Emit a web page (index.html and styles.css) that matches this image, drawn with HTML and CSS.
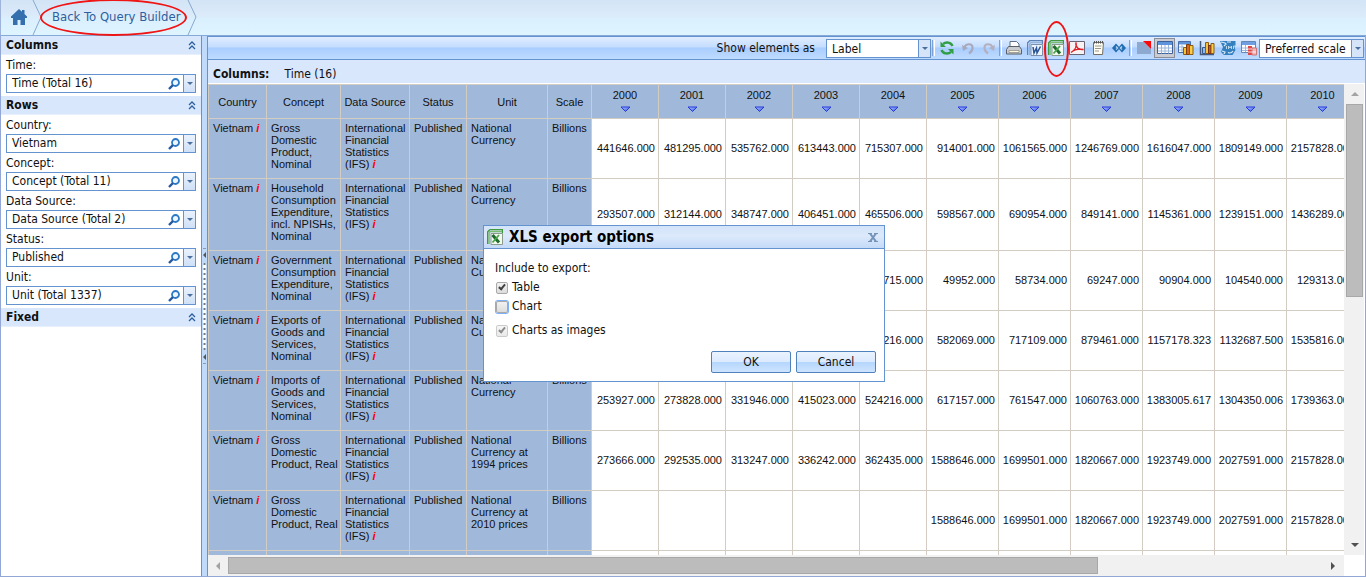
FILE: index.html
```html
<!DOCTYPE html>
<html lang="en">

<head>
    <meta charset="UTF-8">
    <meta name="viewport" content="width=device-width, initial-scale=1.0">
    <title>Query</title>
    <link rel="stylesheet" href="styles.css">
</head>

<body>
    <!-- shared icons -->
    <svg class="defs" width="0" height="0">
        <defs>
            <linearGradient id="gArrow" x1="0" y1="0" x2="1" y2="1">
                <stop offset="0" stop-color="#a9c4ff"/>
                <stop offset="1" stop-color="#2f58e8"/>
            </linearGradient>
        </defs>
        <symbol id="i-sort" viewBox="0 0 11 7"><path d="M1 1h9L5.500 5.500z" fill="url(#gArrow)" stroke="#2a38d8"/></symbol>
        <symbol id="i-up" viewBox="0 0 8 9"><path d="M1 4l3-3 3 3M1 8l3-3 3 3" fill="none" stroke="#2c5f9f" stroke-width="1.300"/></symbol>
        <symbol id="i-search" viewBox="0 0 12 12"><circle cx="7.500" cy="4.500" r="3.500" fill="#eef6ff" stroke="#2c7ac6" stroke-width="1.800"/><path d="M5 7L1 11" stroke="#24589f" stroke-width="2.400"/></symbol>
        <symbol id="i-xls" viewBox="0 0 16 16">
            <path d="M3 .5h12.500v4M.5 15V3L3 .5" fill="none" stroke="#3f9a3f" stroke-width="1.400"/>
            <path d="M2 15V4.500Q2 2.500 4 2.500h11" fill="none" stroke="#79bb70" stroke-width="1.500"/>
            <path d="M4 4.500h11.500v11H4z" fill="#f3f8f1" stroke="#8b9b8b"/>
            <path d="M5.500 6L12 13.500" stroke="#1d6b2b" stroke-width="3"/>
            <path d="M12 6L5.500 13.500" stroke="#4ba64c" stroke-width="1.800"/>
        </symbol>
    </svg>

    <header class="top">
        <a class="home" href="#" aria-label="Home">
            <svg width="16" height="16" viewBox="0 0 16 16"><path d="M8 0l3 2.800V1h2.500v4L16 7.500V9h-2v7H9.500v-5h-3v5H2V9H0V7.500z" fill="#356fae"/></svg>
        </a>
        <svg class="chev" width="10" height="35" viewBox="0 0 10 35"><path d="M1 0l8 17-8 18" fill="none" stroke="#86a9cf"/></svg>
        <a class="back" href="#">Back To Query Builder<span class="mark mark-back"></span></a>
        <svg class="chev" width="10" height="35" viewBox="0 0 10 35"><path d="M1 0l8 17-8 18" fill="none" stroke="#86a9cf"/></svg>
    </header>

    <div class="page">
        <aside class="side">
            <h2>Columns <svg width="8" height="9"><use href="#i-up"/></svg></h2>
            <section>
                <label for="f-time">Time:</label>
                <div class="field"><input id="f-time" type="text" value="Time (Total 16)"><button class="find" aria-label="Search"><svg width="12" height="12"><use href="#i-search"/></svg></button><button class="drop" aria-label="Open"></button></div>
            </section>
            <h2>Rows <svg width="8" height="9"><use href="#i-up"/></svg></h2>
            <section>
                <label for="f-country">Country:</label>
                <div class="field"><input id="f-country" type="text" value="Vietnam"><button class="find" aria-label="Search"><svg width="12" height="12"><use href="#i-search"/></svg></button><button class="drop" aria-label="Open"></button></div>
                <label for="f-concept">Concept:</label>
                <div class="field"><input id="f-concept" type="text" value="Concept (Total 11)"><button class="find" aria-label="Search"><svg width="12" height="12"><use href="#i-search"/></svg></button><button class="drop" aria-label="Open"></button></div>
                <label for="f-source">Data Source:</label>
                <div class="field"><input id="f-source" type="text" value="Data Source (Total 2)"><button class="find" aria-label="Search"><svg width="12" height="12"><use href="#i-search"/></svg></button><button class="drop" aria-label="Open"></button></div>
                <label for="f-status">Status:</label>
                <div class="field"><input id="f-status" type="text" value="Published"><button class="find" aria-label="Search"><svg width="12" height="12"><use href="#i-search"/></svg></button><button class="drop" aria-label="Open"></button></div>
                <label for="f-unit">Unit:</label>
                <div class="field"><input id="f-unit" type="text" value="Unit (Total 1337)"><button class="find" aria-label="Search"><svg width="12" height="12"><use href="#i-search"/></svg></button><button class="drop" aria-label="Open"></button></div>
            </section>
            <h2>Fixed <svg width="8" height="9"><use href="#i-up"/></svg></h2>
        </aside>

        <div class="split">
            <svg width="5" height="116" viewBox="0 0 5 116">
                <path d="M1 .5h3M1 115.500h3" stroke="#8a9bb0"/>
                <path d="M4 4v6L1 7zM4 106v6l-3-3z" fill="#555"/>
                <path d="M2.500 15v87" stroke="#fff" stroke-width="3"/>
                <path d="M2.500 15v87" stroke="#777" stroke-width="2" stroke-dasharray="2 3"/>
            </svg>
        </div>

        <main class="main">
            <div class="bar">
                <label for="show-as">Show elements as</label>
                <span class="pick"><select id="show-as"><option>Label</option></select></span>
                <i class="sep"></i>
                <button class="tool" aria-label="Refresh"><svg viewBox="0 0 16 16"><path d="M13.500 6C12 2 7 1.500 4 4M2.500 10C4 14 9 14.500 12 12" fill="none" stroke="#2f9e44" stroke-width="2.400"/><path d="M1.500 1.500V7H7zM14.500 14.500V9H9z" fill="#2f9e44"/></svg></button>
                <button class="tool" aria-label="Undo"><svg viewBox="0 0 16 16"><path d="M4 8C6 3 13 3 12.500 8c0 3-2 4.500-3.500 5.500" fill="none" stroke="#a9a9bd" stroke-width="2.200"/><path d="M2 5l1 6 5-3z" fill="#a9a9bd"/></svg></button>
                <button class="tool" aria-label="Redo"><svg viewBox="0 0 16 16"><path d="M12 8C10 3 3 3 3.500 8c0 3 2 4.500 3.500 5.500" fill="none" stroke="#b3b0bf" stroke-width="2.200"/><path d="M14 5l-1 6-5-3z" fill="#b3b0bf"/></svg></button>
                <i class="sep"></i>
                <button class="tool" aria-label="Print"><svg viewBox="0 0 16 16"><path d="M4 7V1.500h6.500L13 4v3z" fill="#fff" stroke="#5b7186"/><path d="M2.500 6.500h11l2 3V14H.5V9.500z" fill="#c9cdd2" stroke="#596069"/><path d="M3 10.500h10v2H3z" fill="#fff8d8" stroke="#777" stroke-width=".6"/></svg></button>
                <button class="tool" aria-label="Word"><svg viewBox="0 0 16 16"><path d="M15.500 4V.5H3L.5 3v12" fill="none" stroke="#5c83b7" stroke-width="1.400"/><path d="M2.500 15V4l1.500-1.500h11" fill="none" stroke="#94b4da" stroke-width="1.400"/><path d="M4 4.500h11.500v11H4z" fill="#edf3fb" stroke="#7d90ab"/><path d="M6 7l1 6 2.500-5 .5 5 3.500-6.500" fill="none" stroke="#275296" stroke-width="1.500"/></svg></button>
                <button class="tool" aria-label="Excel"><svg viewBox="0 0 16 16"><use href="#i-xls"/></svg><span class="mark mark-xls"></span></button>
                <button class="tool" aria-label="PDF"><svg viewBox="0 0 16 16"><path d="M.5 1.500h15v13H.5z" fill="#f7f2f3" stroke="#6b6472"/><path d="M2 12.500C6 10 8 6 7 2.500 6 7 10 10.500 14.500 9.500 9 8.500 5 10 2 12.500z" fill="none" stroke="#e02025" stroke-width="1.300"/></svg></button>
                <button class="tool" aria-label="Notes"><svg viewBox="0 0 16 16"><path d="M3.500 2.500h10l-1 12h-9z" fill="#fffdf2" stroke="#746f64"/><path d="M4.500 1v2.500M6.500 1v2.500M8.500 1v2.500M10.500 1v2.500M12.500 1v2.500" stroke="#555"/><path d="M5 6h6.500M5 8.500h6M5 11h4" stroke="#9a968c"/></svg></button>
                <button class="tool" aria-label="Embed"><svg viewBox="0 0 16 16"><path d="M5 3.500L9 8l-4 4.500L1 8zM11 3.500L15 8l-4 4.500L7 8z" fill="#1f6cb0"/><path d="M5 6.500L6.500 8 5 9.500M11 6.500L9.500 8 11 9.500" fill="none" stroke="#b8d6f4" stroke-width="1.400"/></svg></button>
                <i class="sep"></i>
                <button class="tool" aria-label="Corner"><svg viewBox="0 0 16 16"><path d="M1 2h7l7 7v5H1z" fill="#8ea9cf"/><path d="M7 1h8v8z" fill="#fb0808"/></svg></button>
                <button class="tool on" aria-label="Table"><svg viewBox="0 0 16 16"><path d="M.5 1.500h15v12H.5z" fill="#fff" stroke="#3c6199"/><path d="M1 2h14v3H1z" fill="#5d94dd"/><path d="M1 8h14M1 11h14M4.500 5v8.500M8 5v8.500M11.500 5v8.500" stroke="#9ab6dc"/></svg></button>
                <button class="tool" aria-label="Table and chart"><svg viewBox="0 0 16 16"><path d="M.5 1.500h12v11H.5z" fill="#fff" stroke="#4a6da5"/><path d="M1 2h11v2.500H1z" fill="#5d94dd"/><path d="M1 7h5M1 10h5M4 5v7" stroke="#9ab6dc"/><path d="M5.500 7.500h3v7h-3z" fill="#f6c12e" stroke="#8d5a13"/><path d="M8.500 4.500h3v10h-3z" fill="#d9661f" stroke="#7a3b10"/><path d="M11.500 5.500h3.500v9h-3.500z" fill="#f5ce4a" stroke="#8d5a13"/></svg></button>
                <button class="tool" aria-label="Chart"><svg viewBox="0 0 16 16"><path d="M1.500 1v13.500H15" fill="none" stroke="#45597d" stroke-width="1.500"/><path d="M3.500 7.500h3v6h-3z" fill="#8eb8ef" stroke="#34598f"/><path d="M6.500 2.500h3v11h-3z" fill="#f3c33c" stroke="#8d5a13"/><path d="M9.500 5.500h2.500v8H9.500z" fill="#d94d2a" stroke="#7a2b10"/><path d="M12 3.500h3v10h-3z" fill="#f5ce4a" stroke="#8d5a13"/></svg></button>
                <button class="tool" aria-label="Map"><svg viewBox="0 0 16 16"><path d="M0 1h15.500v4l-1 2 1 3-3 5H4l-3-3 2-5z" fill="#347fc0"/><path d="M1 2l4 1 1 1-2 2M2 11l3 1-1 2M7 2h4M8 12.500c2 1 4 0 5-1.500" fill="none" stroke="#d9ebf8" stroke-width="1.200"/><path d="M6.500 6v3M8.500 9V6l1.500 2 1.500-2v3M13.500 9V6H15" fill="none" stroke="#d9ebf8" stroke-width=".8"/></svg></button>
                <button class="tool" aria-label="Highlight"><svg viewBox="0 0 16 16"><path d="M.5 1.500h14v11H.5z" fill="#fff" stroke="#6587b8"/><path d="M1 2h13v3H1z" fill="#6f9fe0"/><path d="M1 8h13M1 10.500h13M4.500 5v7" stroke="#9ab6dc"/><path d="M7 6h4v9H7z" fill="#df4545"/><path d="M11 8h4.500v7H11z" fill="#f3b6b6" stroke="#c77"/><path d="M7 9h4M7 12h8" stroke="#fff" stroke-width=".8"/></svg></button>
                <span class="pick"><select aria-label="Scale"><option>Preferred scale</option></select></span>
            </div>

            <div class="cols"><b>Columns:</b><span>Time (16)</span></div>

            <div class="grid">
                <div class="view">
                    <table>
                        <colgroup>
                            <col class="w58"><col class="w74"><col class="w69"><col class="w57"><col class="w81"><col class="w44">
                            <col class="w67" span="5">
                            <col class="w72" span="6">
                        </colgroup>
                        <thead>
                            <tr>
                                <th>Country</th><th>Concept</th><th>Data Source</th><th>Status</th><th>Unit</th><th>Scale</th>
                                <th class="yr">2000<svg width="11" height="7"><use href="#i-sort"/></svg></th>
                                <th class="yr">2001<svg width="11" height="7"><use href="#i-sort"/></svg></th>
                                <th class="yr">2002<svg width="11" height="7"><use href="#i-sort"/></svg></th>
                                <th class="yr">2003<svg width="11" height="7"><use href="#i-sort"/></svg></th>
                                <th class="yr">2004<svg width="11" height="7"><use href="#i-sort"/></svg></th>
                                <th class="yr">2005<svg width="11" height="7"><use href="#i-sort"/></svg></th>
                                <th class="yr">2006<svg width="11" height="7"><use href="#i-sort"/></svg></th>
                                <th class="yr">2007<svg width="11" height="7"><use href="#i-sort"/></svg></th>
                                <th class="yr">2008<svg width="11" height="7"><use href="#i-sort"/></svg></th>
                                <th class="yr">2009<svg width="11" height="7"><use href="#i-sort"/></svg></th>
                                <th class="yr">2010<svg width="11" height="7"><use href="#i-sort"/></svg></th>
                            </tr>
                        </thead>
                        <tbody>
                            <tr>
                                <th>Vietnam <i>i</i></th><th>Gross Domestic Product, Nominal</th><th>International Financial Statistics (IFS) <i>i</i></th><th>Published</th><th>National Currency</th><th>Billions</th>
                                <td>441646.000</td><td>481295.000</td><td>535762.000</td><td>613443.000</td><td>715307.000</td><td>914001.000</td><td>1061565.000</td><td>1246769.000</td><td>1616047.000</td><td>1809149.000</td><td>2157828.000</td>
                            </tr>
                            <tr>
                                <th>Vietnam <i>i</i></th><th>Household Consumption Expenditure, incl. NPISHs, Nominal</th><th>International Financial Statistics (IFS) <i>i</i></th><th>Published</th><th>National Currency</th><th>Billions</th>
                                <td>293507.000</td><td>312144.000</td><td>348747.000</td><td>406451.000</td><td>465506.000</td><td>598567.000</td><td>690954.000</td><td>849141.000</td><td>1145361.000</td><td>1239151.000</td><td>1436289.000</td>
                            </tr>
                            <tr>
                                <th>Vietnam <i>i</i></th><th>Government Consumption Expenditure, Nominal</th><th>International Financial Statistics (IFS) <i>i</i></th><th>Published</th><th>National Currency</th><th></th>
                                <td></td><td></td><td></td><td></td><td>715.000</td><td>49952.000</td><td>58734.000</td><td>69247.000</td><td>90904.000</td><td>104540.000</td><td>129313.000</td>
                            </tr>
                            <tr>
                                <th>Vietnam <i>i</i></th><th>Exports of Goods and Services, Nominal</th><th>International Financial Statistics (IFS) <i>i</i></th><th>Published</th><th>National Currency</th><th></th>
                                <td></td><td></td><td></td><td></td><td>216.000</td><td>582069.000</td><td>717109.000</td><td>879461.000</td><td>1157178.323</td><td>1132687.500</td><td>1535816.000</td>
                            </tr>
                            <tr>
                                <th>Vietnam <i>i</i></th><th>Imports of Goods and Services, Nominal</th><th>International Financial Statistics (IFS) <i>i</i></th><th>Published</th><th>National Currency</th><th>Billions</th>
                                <td>253927.000</td><td>273828.000</td><td>331946.000</td><td>415023.000</td><td>524216.000</td><td>617157.000</td><td>761547.000</td><td>1060763.000</td><td>1383005.617</td><td>1304350.006</td><td>1739363.000</td>
                            </tr>
                            <tr>
                                <th>Vietnam <i>i</i></th><th>Gross Domestic Product, Real</th><th>International Financial Statistics (IFS) <i>i</i></th><th>Published</th><th>National Currency at 1994 prices</th><th>Billions</th>
                                <td>273666.000</td><td>292535.000</td><td>313247.000</td><td>336242.000</td><td>362435.000</td><td>1588646.000</td><td>1699501.000</td><td>1820667.000</td><td>1923749.000</td><td>2027591.000</td><td>2157828.000</td>
                            </tr>
                            <tr>
                                <th>Vietnam <i>i</i></th><th>Gross Domestic Product, Real</th><th>International Financial Statistics (IFS) <i>i</i></th><th>Published</th><th>National Currency at 2010 prices</th><th>Billions</th>
                                <td></td><td></td><td></td><td></td><td></td><td>1588646.000</td><td>1699501.000</td><td>1820667.000</td><td>1923749.000</td><td>2027591.000</td><td>2157828.000</td>
                            </tr>
                            <tr>
                                <th></th><th></th><th></th><th></th><th></th><th></th>
                                <td></td><td></td><td></td><td></td><td></td><td></td><td></td><td></td><td></td><td></td><td></td>
                            </tr>
                        </tbody>
                    </table>
                </div>
                <div class="vscroll">
                    <svg width="20" height="20" viewBox="0 0 20 20"><path d="M7 12h8l-4-4z" fill="#a3a3a3"/></svg>
                    <div class="thumb"></div>
                    <svg width="20" height="20" viewBox="0 0 20 20"><path d="M7 8h8l-4 4z" fill="#505050"/></svg>
                </div>
                <div class="hscroll">
                    <svg width="20" height="21" viewBox="0 0 20 21"><path d="M12 7v8l-4-4z" fill="#a3a3a3"/></svg>
                    <div class="thumb"></div>
                    <svg width="20" height="21" viewBox="0 0 20 21"><path d="M7 7v8l4-4z" fill="#505050"/></svg>
                </div>
            </div>
        </main>
    </div>

    <div class="dialog" role="dialog" aria-labelledby="dlg-title">
        <div class="dlg-head">
            <svg width="16" height="16"><use href="#i-xls"/></svg>
            <h1 id="dlg-title">XLS export options</h1>
            <button class="close" aria-label="Close"><svg width="10" height="9" viewBox="0 0 10 9"><path d="M2 .5l6 8M8 .5l-6 8" stroke="#7493b8" stroke-width="2"/><path d="M0 .5h4M6 .5h4M0 8.500h4M6 8.500h4" stroke="#7493b8"/></svg></button>
        </div>
        <div class="dlg-body">
            <p>Include to export:</p>
            <label><input type="checkbox" checked>Table</label>
            <label><input type="checkbox" class="focus">Chart</label>
            <label class="apart"><input type="checkbox" checked disabled>Charts as images</label>
            <div class="dlg-foot">
                <button>OK</button>
                <button>Cancel</button>
            </div>
        </div>
    </div>
</body>

</html>
```
FILE: styles.css
```css
* {
    margin: 0;
    padding: 0;
    box-sizing: border-box;
}
body {
    height: 100vh;
    display: flex;
    flex-direction: column;
    overflow: hidden;
    position: relative;
    font: 12px/19px Tahoma, "DejaVu Sans Condensed", "Noto Sans", sans-serif;
    color: #111;
    background: #fff;
}
button, input, select {
    font: inherit;
    color: inherit;
    border: 0;
    background: none;
    outline: none;
    border-radius: 0;
}
svg {
    display: block;
    flex: none;
}
.defs {
    position: absolute;
}

/* breadcrumb */
.top {
    height: 36px;
    flex: none;
    display: flex;
    background: linear-gradient(#d3e4f6, #dbebfa 45%, #daf0fe 55%, #def4ff);
    border-bottom: 1px solid #86a9d8;
    border-left: 1px solid #9fb4da;
}
.home {
    width: 31px;
    padding: 9px 0 0 10px;
}
.back {
    position: relative;
    padding: 0 6px 0 10px;
    font-size: 13px;
    line-height: 34px;
    color: #2f5f9f;
    text-decoration: none;
}
.mark {
    position: absolute;
    border: 2px solid #f01414;
    border-radius: 50%;
    pointer-events: none;
}
.mark-back {
    left: -2px;
    right: 0;
    top: -1px;
    height: 37px;
}
.mark-xls {
    left: -1px;
    top: -17px;
    width: 25px;
    height: 56px;
    z-index: 1;
}

.page {
    flex: 1;
    min-height: 0;
    display: flex;
    border: 1px solid #93a7d6;
    border-top: 0;
}

/* left panel */
.side {
    width: 201px;
    flex: none;
    border-right: 1px solid #6593cf;
    background: #fff;
}
.side h2 {
    display: flex;
    justify-content: space-between;
    align-items: center;
    height: 19px;
    padding: 1px 5px 0;
    font-size: 12px;
    background: #d9e7fd;
    border-bottom: 1px solid #e8f0fd;
}
.side section {
    padding: 0 5px 3px;
}
.side label {
    display: block;
    height: 19px;
    padding-top: 1px;
}
.field {
    display: flex;
    height: 19px;
    border: 1px solid #6593cf;
}
.field input {
    flex: 1;
    min-width: 0;
    padding-left: 5px;
}
.find {
    width: 15px;
}
.drop {
    width: 12px;
    border-left: 1px solid #6593cf;
    background: linear-gradient(#eaf2fc, #cfe0f7);
}
.drop::before,
.pick::after {
    content: "";
    display: block;
    margin: 0 auto;
    width: 0;
    border: 3px solid transparent;
    border-top-color: #4a6f9f;
    border-bottom: 0;
}

.split {
    width: 5px;
    flex: none;
    display: flex;
    align-items: center;
    background: #c0dafc;
}

/* toolbar */
.main {
    flex: 1;
    min-width: 0;
    display: flex;
    flex-direction: column;
    border-left: 1px solid #6593cf;
}
.bar {
    height: 24px;
    flex: none;
    display: flex;
    justify-content: flex-end;
    align-items: center;
    padding-right: 1px;
    background: linear-gradient(#e0edff, #c4ddff 45%, #a9cdff 50%, #bfdbff);
    border-top: 1px solid #6593cf;
    border-bottom: 1px solid #6593cf;
}
.bar label {
    margin-right: 11px;
}
.pick {
    position: relative;
    width: 105px;
    height: 19px;
}
.pick select {
    width: 105px;
    height: 19px;
    padding: 0 14px 0 5px;
    appearance: none;
    border: 1px solid #6593cf;
    background: linear-gradient(90deg, transparent 91px, #6593cf 91px, #6593cf 92px, #d5e4f9 92px) #fff;
}
.pick::after {
    position: absolute;
    right: 3px;
    top: 8px;
}
.sep {
    width: 3px;
    height: 16px;
    margin-right: 1px;
    border-left: 1px solid #7ba3d8;
    border-right: 1px solid #fff;
}
.pick + .sep {
    margin-left: 1px;
}
.tool {
    position: relative;
    width: 21px;
    height: 20px;
    display: flex;
    align-items: center;
    justify-content: center;
}
.tool svg {
    width: 16px;
    height: 16px;
}
.tool.on {
    border: 1px solid #8d8d95;
    background: #c9ccd3;
}

.cols {
    height: 24px;
    flex: none;
    padding: 5px 5px 0;
    background: #d9e7fd;
    border-bottom: 1px solid #fff;
}
.cols b {
    margin-right: 15px;
}

/* data table */
.grid {
    flex: 1;
    min-height: 0;
    display: grid;
    grid-template-columns: 1fr 21px;
    grid-template-rows: 1fr 21px;
}
.view {
    overflow: hidden;
    min-width: 0;
}
table {
    width: 1151px;
    table-layout: fixed;
    border-collapse: collapse;
    font: 11px/12px Arial, "Liberation Sans", sans-serif;
}
.w44 { width: 44px; }
.w57 { width: 57px; }
.w58 { width: 58px; }
.w67 { width: 67px; }
.w69 { width: 69px; }
.w72 { width: 72px; }
.w74 { width: 74px; }
.w81 { width: 81px; }
th, td {
    border: 1px solid #d2ccc2;
}
th {
    font-weight: normal;
    background: #a0b9db;
}
thead th {
    height: 34px;
    white-space: nowrap;
}
.yr {
    vertical-align: top;
    padding-top: 4px;
}
.yr svg {
    margin: 5px auto 0;
}
tbody th {
    padding: 3px 0 8px 4px;
    height: 60px;
    text-align: left;
    vertical-align: top;
}
th i {
    font-weight: bold;
    color: #f00;
}
td {
    padding: 0 3px 2px 0;
    text-align: right;
}

.vscroll, .hscroll {
    display: flex;
    background: #f1f1f1;
}
.vscroll {
    flex-direction: column;
    border-right: 1px solid #fff;
}
.thumb {
    background: #bcbcbc;
    border: 1px solid #a8a8a8;
}
.vscroll .thumb {
    height: 41%;
    margin: 0 1px auto 2px;
}
.hscroll .thumb {
    flex: 0 1 870px;
    margin: 2px auto 2px 0;
}

/* export dialog */
.dialog {
    position: absolute;
    left: 483px;
    top: 225px;
    width: 402px;
    border: 1px solid #6593cf;
    background: #fff;
}
.dlg-head {
    display: flex;
    align-items: center;
    height: 23px;
    padding: 0 6px 0 3px;
    background: linear-gradient(#d3e3f9, #dce9fb 45%, #c4daf8);
    border-bottom: 1px solid #6593cf;
}
.dlg-head h1 {
    margin-left: 6px;
    font-size: 15px;
    color: #000;
}
.close {
    margin-left: auto;
}
.dlg-body {
    padding: 10px 8px 8px 11px;
}
.dlg-body label {
    display: flex;
    align-items: center;
    height: 19px;
}
.dlg-body .apart {
    margin-top: 5px;
}
.dlg-body input {
    position: relative;
    width: 12px;
    height: 12px;
    margin: 0 4px 0 1px;
    appearance: none;
    border: 1px solid #a9a9a9;
    border-radius: 2px;
    background: linear-gradient(#f2f2f2, #dcdcdc);
}
.dlg-body input:checked::after {
    content: "";
    position: absolute;
    left: 3px;
    top: 0;
    width: 2px;
    height: 5px;
    border: solid #404040;
    border-width: 0 2px 2px 0;
    transform: rotate(40deg);
}
.dlg-body input:disabled {
    opacity: .6;
}
.dlg-body .focus {
    box-shadow: 0 0 0 1px #7fb0f5;
}
.dlg-foot {
    display: flex;
    justify-content: flex-end;
    gap: 5px;
    margin-top: 11px;
}
.dlg-foot button {
    width: 80px;
    height: 22px;
    border: 1px solid #4f81bd;
    border-radius: 2px;
    background: linear-gradient(#eaf3ff, #dceaff 50%, #b5d6fd 52%, #cfe4ff);
}
```
